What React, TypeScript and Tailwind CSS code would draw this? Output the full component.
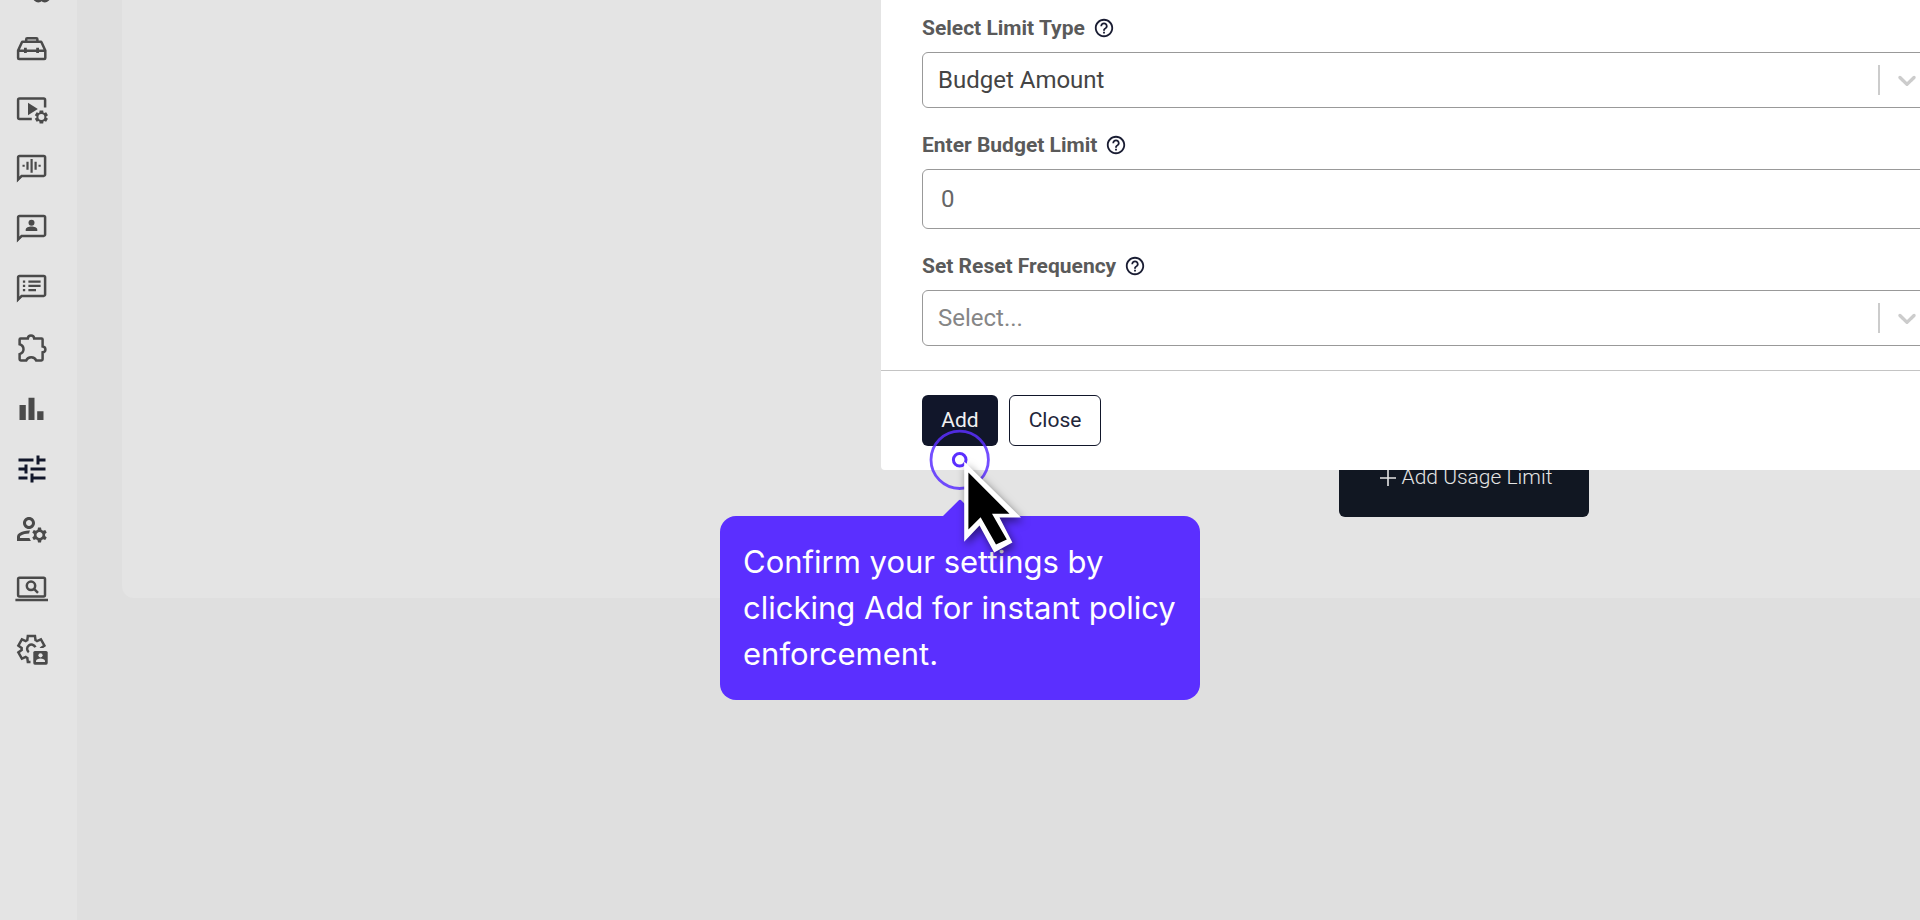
import type { ReactNode } from 'react';
import { MdHelpOutline, MdOutlineManageAccounts, MdTune } from 'react-icons/md';

const GEAR =
  'M370-80l-16-128q-13-5-24.5-12T307-235l-119 50L78-375l103-78q-1-7-1-13.5v-27q0-6.5 1-13.5L78-585l110-190 119 50q11-8 23-15t24-12l16-128h220l16 128q13 5 24.5 12t22.5 15l119-50 110 190-103 78q1 7 1 13.5v27q0 6.5-2 13.5l103 78-110 190-118-50q-11 8-23 15t-24 12L590-80H370Z';

function Icon({ children }: { children: ReactNode }) {
  return (
    <svg width="36" height="36" viewBox="0 0 36 36" fill="none" stroke="currentColor" strokeWidth="2.5">
      {children}
    </svg>
  );
}

function ChatIcon({ children }: { children: ReactNode }) {
  return (
    <Icon>
      <path d="M4.1 28.5V6.3a1.4 1.4 0 0 1 1.4-1.4h24.2a1.4 1.4 0 0 1 1.4 1.4v17.2a1.4 1.4 0 0 1-1.4 1.4H7.6z" />
      <path d="M3 26v4.7L8 26z" fill="currentColor" stroke="none" />
      {children}
    </Icon>
  );
}

const navItems = [
  {
    label: 'Agents',
    icon: (
      <Icon>
        <circle cx="24.3" cy="26" r="4.2" />
        <circle cx="30.8" cy="26" r="4.2" />
      </Icon>
    ),
  },
  {
    label: 'Toolbox',
    icon: (
      <Icon>
        <path d="M4.1 19.5V27a1 1 0 0 0 1 1h25.2a1 1 0 0 0 1-1v-7.5L27.6 11.4a1 1 0 0 0-.9-.6H8.7a1 1 0 0 0-.9.6zM4.1 19.7h27.2M12.2 10.8V8.3a1 1 0 0 1 1-1h9.2a1 1 0 0 1 1 1v2.5" />
        <path d="M11.4 16.8v5.2M23.6 16.8v5.2" strokeWidth="2.8" />
      </Icon>
    ),
  },
  {
    label: 'Video settings',
    icon: (
      <Icon>
        <path d="M31.1 16.5V9a1.4 1.4 0 0 0-1.4-1.4H5.5A1.4 1.4 0 0 0 4.1 9v17.5a1.4 1.4 0 0 0 1.4 1.4h12.3" />
        <path d="M14 11.7v12.5l9.8-6.3z" fill="currentColor" stroke="none" />
        <g transform="translate(27.4 26) scale(0.0163) translate(-480 480)">
          <path d={GEAR} fill="currentColor" stroke="none" />
        </g>
        <circle cx="27.4" cy="26" r="3" fill="#e4e4e4" stroke="none" />
      </Icon>
    ),
  },
  {
    label: 'Voice chat',
    icon: (
      <ChatIcon>
        <path d="M9.6 13.7v2M13.5 10.7v8M17.6 8v13.8M21.6 10.7v8M25.6 13.7v2" strokeWidth="2.2" />
      </ChatIcon>
    ),
  },
  {
    label: 'Personas',
    icon: (
      <ChatIcon>
        <circle cx="17.5" cy="11.7" r="3" fill="currentColor" stroke="none" />
        <path d="M11.7 20v-1.3c0-2 3-3.2 5.8-3.2s5.8 1.2 5.8 3.2V20z" fill="currentColor" stroke="none" />
      </ChatIcon>
    ),
  },
  {
    label: 'Prompts',
    icon: (
      <ChatIcon>
        <path
          d="M8.9 10.7h2.3M8.9 14.9h2.3M8.9 19.1h2.3M14.4 10.7h12.2M14.4 14.9h12.2M14.4 19.1H22"
          strokeWidth="2.2"
        />
      </ChatIcon>
    ),
  },
  {
    label: 'Extensions',
    icon: (
      <Icon>
        <path d="M5.6 8.5a1 1 0 0 1 1-1h7.2c.2-1.8 1.4-3 3.2-3s3 1.2 3.2 3h7.4a1 1 0 0 1 1 1v7c1.6.2 2.8 1.3 2.8 2.9s-1.2 2.7-2.8 2.9v7a1.2 1.2 0 0 1-1.2 1.2h-5.2c-.8-2-2.6-3.3-5-3.3s-4.2 1.3-5 3.3H6.8a1.2 1.2 0 0 1-1.2-1.2v-5.2c2.4-.8 3.9-2.6 3.9-4.9s-1.5-4.1-3.9-4.9z" />
      </Icon>
    ),
  },
  {
    label: 'Analytics',
    icon: (
      <Icon>
        <path d="M5.5 14h6.3v15H5.5zM14.5 6.8h6V29h-6zM23.2 20.2h6.3V29h-6.3z" fill="currentColor" stroke="none" />
      </Icon>
    ),
  },
  { label: 'Usage limits', icon: <MdTune size={36} />, active: true },
  { label: 'Manage accounts', icon: <MdOutlineManageAccounts size={36} /> },
  {
    label: 'Audit',
    icon: (
      <Icon>
        <rect x="4.1" y="6.8" width="26.9" height="18.6" rx="1.4" />
        <path d="M1.4 29.1h32.6" />
        <circle cx="17" cy="14.8" r="4.2" />
        <path d="M20 17.8l4 4" />
      </Icon>
    ),
  },
  {
    label: 'Admin settings',
    icon: (
      <Icon>
        <clipPath id="gear-cut">
          <path d="M0 0h36v17H20l-3.5 4v15H0z" />
        </clipPath>
        <g clipPath="url(#gear-cut)">
          <g transform="translate(17.4 18) scale(0.0325) translate(-480 480)">
            <path d={GEAR} strokeWidth="76" />
          </g>
        </g>
        <path d="M21.4 16.3a4.3 4.3 0 1 0-6.6 5" />
        <rect x="19.3" y="20" width="14.4" height="13.7" rx="1.6" fill="currentColor" stroke="none" />
        <circle cx="26.5" cy="24.3" r="2.1" fill="#e4e4e4" stroke="none" />
        <path d="M22 31v-.8c0-1.7 2.3-2.7 4.5-2.7s4.5 1 4.5 2.7v.8z" fill="#e4e4e4" stroke="none" />
      </Icon>
    ),
  },
];

function Sidebar() {
  return (
    <nav className="w-[77px] shrink-0 overflow-hidden bg-[#e4e4e4]">
      <div className="-mt-[29px] flex flex-col gap-6 pl-3.5">
        {navItems.map((item) => (
          <a
            key={item.label}
            href="#"
            aria-label={item.label}
            className={item.active ? 'w-9 text-[#11162a]' : 'w-9 text-[#4a4a4a]'}
          >
            {item.icon}
          </a>
        ))}
      </div>
    </nav>
  );
}

function FieldLabel({ id, text }: { id: string; text: string }) {
  return (
    <div className="mb-2.5 flex h-7 items-center gap-2">
      <label htmlFor={id} className="text-[21px] leading-7 font-bold text-[#5a5a5a]">
        {text}
      </label>
      <MdHelpOutline size={22} className="text-[#1a1d33]" />
    </div>
  );
}

function SelectField({ id, label, value, muted }: { id: string; label: string; value: string; muted?: boolean }) {
  return (
    <div>
      <FieldLabel id={id} text={label} />
      <div className="relative">
        <select
          id={id}
          className={`block h-14 w-full appearance-none rounded-md border border-[#999999] bg-white px-[15px] text-[24px] ${
            muted ? 'text-[#868686]' : 'text-[#444444]'
          }`}
        >
          <option>{value}</option>
        </select>
        <div className="pointer-events-none absolute inset-y-0 right-0 flex items-center gap-3 pr-2">
          <span className="h-[30px] w-[2px] bg-[#cccccc]" />
          <svg width="30" height="30" viewBox="0 0 20 20" fill="#cccccc">
            <path d="M4.516 7.548c0.436-0.446 1.043-0.481 1.576 0l3.908 3.747 3.908-3.747c0.533-0.481 1.141-0.446 1.574 0 0.436 0.445 0.408 1.197 0 1.615-0.406 0.418-4.695 4.502-4.695 4.502-0.217 0.223-0.502 0.335-0.787 0.335s-0.570-0.112-0.789-0.335c0 0-4.287-4.084-4.695-4.502s-0.436-1.170 0-1.615z" />
          </svg>
        </div>
      </div>
    </div>
  );
}

function LimitDialog() {
  return (
    <div role="dialog" aria-label="Usage limit" className="w-full rounded-bl bg-white">
      <div className="-mr-2.5 flex flex-col gap-[23px] pt-3.5 pb-6 pl-[41px]">
        <SelectField id="limit-type" label="Select Limit Type" value="Budget Amount" />
        <div>
          <FieldLabel id="budget-limit" text="Enter Budget Limit" />
          <input
            id="budget-limit"
            type="text"
            defaultValue="0"
            className="block h-[60px] w-full rounded-md border border-[#999999] px-[18px] text-[24px] text-[#666666]"
          />
        </div>
        <SelectField id="reset-frequency" label="Set Reset Frequency" value="Select..." muted />
      </div>
      <div className="flex gap-[11px] border-t border-[#c4c4c4] py-6 pl-[41px]">
        <button className="h-[51px] w-[76px] rounded-md bg-[#11162a] text-[21px] text-[#f0f0f2]">Add</button>
        <button className="h-[51px] w-[92px] rounded-md border border-[#11162a] text-[21px] text-[#22263a]">
          Close
        </button>
      </div>
    </div>
  );
}

function TourStep() {
  return (
    <div className="absolute top-[516px] left-1/2 w-[480px] -translate-x-1/2">
      <div className="absolute -top-3 left-1/2 size-6 -translate-x-1/2 rotate-45 rounded-tl-xs bg-[#5b2fff]" />
      <p className="relative rounded-2xl bg-[#5b2fff] py-[23px] pr-4 pl-[23px] font-['Inter',sans-serif] text-[31px] leading-[46px] text-white">
        Confirm your settings by clicking Add for instant policy enforcement.
      </p>
      <svg
        className="pointer-events-none absolute -top-[88px] left-[208px]"
        width="104"
        height="136"
        viewBox="928 428 104 136"
        fill="none"
      >
        <circle cx="959.7" cy="459.8" r="28.7" stroke="#5b2fff" strokeWidth="2.8" opacity="0.85" />
        <circle cx="959.7" cy="459.8" r="6.3" fill="#fff" stroke="#5b2fff" strokeWidth="3" />
        <g className="drop-shadow-[2px_4px_4px_rgba(0,0,0,0.5)]">
          <path d="M964.2 461.5V541.7L979.5 525.5L994.2 552.4L1012.4 542.6L999.5 517.5H1021z" fill="#fff" />
          <path d="M968.4 472.5V529.5L980.6 517.2L996 544.6L1006.8 539.6L992 513.8H1009.5z" fill="#000" />
        </g>
      </svg>
    </div>
  );
}

export default function App() {
  return (
    <div className="relative flex min-h-screen overflow-hidden bg-[#dfdfdf] font-['Roboto',sans-serif]">
      <Sidebar />
      <main className="flex-1 pl-[45px]">
        <section className="flex justify-end rounded-bl-xl bg-[#e4e4e4] pt-[438px] pr-[331px] pb-[81px]">
          <button className="flex h-[79px] w-[250px] items-center justify-center gap-1.5 rounded-md bg-[#111722] pl-1 text-[21px] font-light text-[#e4e4e4]">
            <svg width="16" height="16" viewBox="0 0 16 16" stroke="currentColor" strokeWidth="1.6">
              <path d="M8 0v16M0 8h16" />
            </svg>
            Add Usage Limit
          </button>
        </section>
      </main>
      <div className="absolute inset-x-0 top-0 pl-[881px]">
        <LimitDialog />
      </div>
      <TourStep />
    </div>
  );
}
